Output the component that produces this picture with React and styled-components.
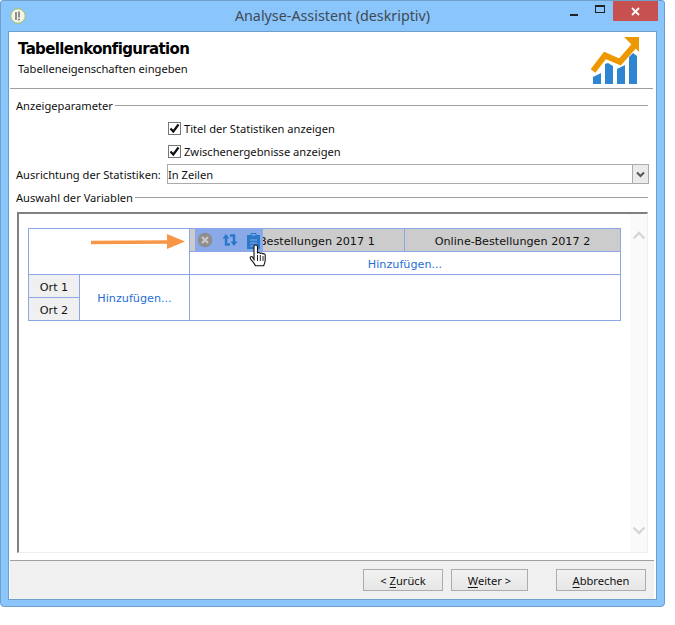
import React from 'react';
import styled, { createGlobalStyle } from 'styled-components';

const GlobalStyle = createGlobalStyle`
  html, body {
    margin: 0;
    padding: 0;
    background: #ffffff;
  }
  * {
    box-sizing: border-box;
  }
`;

const uiFont = `"Noto Sans", "Open Sans", sans-serif`;
const tableFont = `"DejaVu Sans", Verdana, sans-serif`;

const Window = styled('div')`
  width: 665px;
  height: 607px;
  display: flex;
  flex-direction: column;
  padding: 0 7px 6px 7px;
  background: #8ac5fb;
  border: 1px solid #6f9fcb;
  border-radius: 3px 3px 4px 4px;
  font-family: ${uiFont};
  font-size: 11.15px;
  color: #111;
`;

const TitleBar = styled('div')`
  position: relative;
  height: 30px;
  flex: none;
  padding-bottom: 2px;
  display: flex;
  align-items: center;
  justify-content: center;
`;

const TitleText = styled('span')`
  font-size: 14.3px;
  color: #3f4a55;
`;

const AppIcon = styled('svg')`
  position: absolute;
  left: 2px;
  top: 7px;
`;

const WindowControls = styled('div')`
  position: absolute;
  right: -1px;
  top: 0;
  display: flex;
  align-items: flex-start;
`;

const ControlSlot = styled('div')`
  width: ${(p) => p.$w}px;
  height: 20px;
  padding-left: ${(p) => p.$pad || 0}px;
  display: flex;
  align-items: center;
  justify-content: ${(p) => (p.$close ? 'center' : 'flex-start')};
  background: ${(p) => (p.$close ? '#c75050' : 'transparent')};
`;

const Client = styled('div')`
  flex: 1;
  display: flex;
  flex-direction: column;
  background: #ffffff;
  border: 1px solid #6f9fcb;
  min-height: 0;
`;

const Header = styled('div')`
  height: 57px;
  flex: none;
  margin-right: 3px;
  margin-left: 1px;
  padding: 7px 12px 0 8px;
  display: flex;
  justify-content: space-between;
  border-bottom: 1px solid #a0a0a0;
`;

const HeaderTitle = styled('h1')`
  margin: 0;
  font-size: 15px;
  line-height: 20px;
  font-weight: 700;
  color: #000;
  font-family: "DejaVu Sans", sans-serif;
  letter-spacing: -0.65px;
`;

const HeaderSub = styled('div')`
  line-height: 20px;
`;

const Logo = styled('svg')`
  flex: none;
  margin-top: -2px;
`;

const Body = styled('div')`
  flex: 1;
  min-height: 0;
  padding: 7px 8px 7px 7px;
  display: flex;
  flex-direction: column;
`;

const Legend = styled('div')`
  height: 18px;
  display: flex;
  align-items: center;
  gap: 2px;
  white-space: nowrap;
  &::after {
    content: '';
    flex: 1;
    height: 1px;
    background: #a0a0a0;
  }
`;

const CheckGroup = styled('div')`
  margin-top: 3px;
`;

const CheckRow = styled('label')`
  height: 23px;
  padding-left: 152px;
  display: flex;
  align-items: center;
  gap: 3px;
  white-space: nowrap;
`;

const CheckBox = styled('span')`
  width: 13px;
  height: 13px;
  border: 1px solid #777;
  background: #fff;
  display: flex;
  align-items: center;
  justify-content: center;
`;

const SelectRow = styled('div')`
  height: 20px;
  margin-top: 1px;
  display: flex;
  align-items: center;
  white-space: nowrap;
`;

const SelectLabel = styled('span')`
  width: 151px;
  flex: none;
`;

const SelectBox = styled('div')`
  flex: 1;
  height: 20px;
  margin-right: -1px;
  display: flex;
  align-items: center;
  justify-content: space-between;
  border: 1px solid #ababab;
`;

const SelectArrow = styled('div')`
  width: 16px;
  height: 18px;
  display: flex;
  align-items: center;
  justify-content: center;
  background: #ebebeb;
  border-left: 1px solid #ababab;
`;

const VariablesLegend = styled(Legend)`
  margin-top: 4px;
`;

const Panel = styled('div')`
  position: relative;
  flex: 1;
  margin: 6px 0 0 1px;
  padding: 14px 27px 0 9px;
  border-top: 2px solid #808080;
  border-left: 2px solid #808080;
  border-bottom: 1px solid #efefef;
  border-right: 1px solid #efefef;
`;

const ScrollTrack = styled('div')`
  position: absolute;
  right: 0;
  top: 0;
  bottom: 0;
  width: 17px;
  background: #fafafa;
  display: flex;
  flex-direction: column;
  justify-content: space-between;
  align-items: center;
  padding: 17px 0 17px;
`;

const Grid = styled('div')`
  display: grid;
  grid-template-columns: 51px 110px 215px 216px;
  grid-template-rows: 23px 23px 23px 23px;
  width: 593px;
  border-top: 1px solid #8ba7e6;
  border-left: 1px solid #8ba7e6;
  font-family: ${tableFont};
  font-size: 11.2px;
`;

const Cell = styled('div')`
  display: flex;
  align-items: center;
  justify-content: center;
  padding-top: 2px;
  white-space: nowrap;
  border-right: 1px solid #8ba7e6;
  border-bottom: 1px solid #8ba7e6;
  grid-column: ${(p) => p.$col || 'auto'};
  grid-row: ${(p) => p.$row || 'auto'};
  background: ${(p) => p.$bg || '#fff'};
`;

const AddLink = styled('span')`
  color: #1f6fd6;
`;

const Toolbar = styled('div')`
  position: absolute;
  left: 176px;
  top: 14px;
  width: 68px;
  height: 24px;
  display: flex;
  align-items: center;
  gap: 9px;
  padding-left: 2px;
  background: #8aa9e8;
`;

const Arrow = styled('svg')`
  position: absolute;
  left: 72px;
  top: 18px;
`;

const HandCursor = styled('svg')`
  position: absolute;
  left: 230px;
  top: 30px;
`;

const Footer = styled('div')`
  height: 39px;
  flex: none;
  margin-left: 1px;
  margin-right: 2px;
  padding: 8px 8px 0 0;
  display: flex;
  justify-content: flex-end;
  background: #f0f0f0;
  border-top: 1px solid #a0a0a0;
`;

const Button = styled('button')`
  width: ${(p) => p.$w}px;
  height: 22px;
  margin-left: ${(p) => p.$gap}px;
  padding: 0;
  font-family: ${uiFont};
  font-size: 11.15px;
  color: #111;
  background: linear-gradient(#f2f2f2, #e6e6e6);
  border: 1px solid #acacac;
  u {
    text-underline-offset: 2px;
  }
`;

const Chevron = ({ up }) => (
  <svg width="14" height="9" viewBox="0 0 14 9">
    <path
      d={up ? 'M1.5 7.5 7 2l5.5 5.5' : 'M1.5 1.5 7 7l5.5-5.5'}
      fill="none"
      stroke="#d6d6d6"
      strokeWidth="2.4"
    />
  </svg>
);

const Check = () => (
  <svg width="11" height="11" viewBox="0 0 11 11">
    <path d="M1.500 5.500 4.300 8.500 9.500 1.500" fill="none" stroke="#111" strokeWidth="2.200" />
  </svg>
);

const App = () => (
  <>
    <GlobalStyle />
    <Window>
      <TitleBar>
        <AppIcon width="16" height="16" viewBox="0 0 16 16">
          <circle cx="8" cy="8" r="7.2" fill="#f4f4ec" stroke="#a8c05a" strokeWidth="1" />
          <path d="M6 4v8M9 3.5v6" stroke="#777" strokeWidth="1.6" fill="none" />
          <circle cx="9" cy="11.5" r="1" fill="#777" />
        </AppIcon>
        <TitleText>Analyse-Assistent (deskriptiv)</TitleText>
        <WindowControls>
          <ControlSlot $w={26} $pad={1}>
            <svg width="9" height="10" viewBox="0 0 9 10">
              <rect x="0" y="8" width="8" height="2" fill="#222" />
            </svg>
          </ControlSlot>
          <ControlSlot $w={18}>
            <svg width="11" height="9" viewBox="0 0 11 9" style={{ marginTop: -3 }}>
              <rect x="0.5" y="0.5" width="9" height="7" fill="none" stroke="#222" />
              <rect x="0" y="0" width="10" height="2" fill="#222" />
            </svg>
          </ControlSlot>
          <ControlSlot $w={45} $close>
            <svg width="9" height="9" viewBox="0 0 9 9">
              <path d="M1 1l7 7M8 1 1 8" stroke="#fff" strokeWidth="1.8" />
            </svg>
          </ControlSlot>
        </WindowControls>
      </TitleBar>
      <Client>
        <Header>
          <div>
            <HeaderTitle>Tabellenkonfiguration</HeaderTitle>
            <HeaderSub>Tabelleneigenschaften eingeben</HeaderSub>
          </div>
          <Logo width="50" height="47" viewBox="0 0 50 47">
            <path
              d="M2 40 10 36v11H2zM14 27l3-1 5 3v18h-8zM26 32l8-4v19h-8zM38 20l4-4 4 3v28h-8z"
              fill="#2e86d2"
            />
            <path
              d="M2 34 14 18.500 29 25 43 9"
              fill="none"
              stroke="#ee9800"
              strokeWidth="6"
            />
            <path d="M33 0h15v15z" fill="#ee9800" />
          </Logo>
        </Header>
        <Body>
          <Legend>Anzeigeparameter</Legend>
          <CheckGroup>
            <CheckRow>
              <CheckBox><Check /></CheckBox>
              Titel der Statistiken anzeigen
            </CheckRow>
            <CheckRow>
              <CheckBox><Check /></CheckBox>
              Zwischenergebnisse anzeigen
            </CheckRow>
          </CheckGroup>
          <SelectRow>
            <SelectLabel>Ausrichtung der Statistiken:</SelectLabel>
            <SelectBox>
              In Zeilen
              <SelectArrow>
                <svg width="9" height="7" viewBox="0 0 9 7">
                  <path d="M1 1.500 4.500 5 8 1.500" fill="none" stroke="#555" strokeWidth="2" />
                </svg>
              </SelectArrow>
            </SelectBox>
          </SelectRow>
          <VariablesLegend>Auswahl der Variablen</VariablesLegend>
          <Panel>
            <Grid>
              <Cell $col="1 / 3" $row="1 / 3" />
              <Cell $col="3" $row="1" $bg="#cccccc">Online-Bestellungen 2017 1</Cell>
              <Cell $col="4" $row="1" $bg="#cccccc">Online-Bestellungen 2017 2</Cell>
              <Cell $col="3 / 5" $row="2"><AddLink>Hinzufügen...</AddLink></Cell>
              <Cell $col="1" $row="3" $bg="#f0f0f0">Ort 1</Cell>
              <Cell $col="1" $row="4" $bg="#f0f0f0">Ort 2</Cell>
              <Cell $col="2" $row="3 / 5"><AddLink>Hinzufügen...</AddLink></Cell>
              <Cell $col="3 / 5" $row="3 / 5" />
            </Grid>
            <Arrow width="96" height="20" viewBox="0 0 96 20">
              <path d="M0 10.500 78 10" stroke="#f79646" strokeWidth="3.500" />
              <path d="M76 2 94 9.500 76 17z" fill="#f79646" />
            </Arrow>
            <Toolbar>
              <svg width="16" height="16" viewBox="0 0 16 16">
                <circle cx="8" cy="8" r="7.300" fill="#8e8e8e" />
                <path d="M5 5l6 6M11 5l-6 6" stroke="#c8c8c8" strokeWidth="2.200" />
              </svg>
              <svg width="16" height="16" viewBox="0 0 16 16">
                <path d="M4 5v7.500h4M12 11V3.500H8" fill="none" stroke="#2a78c8" strokeWidth="2.400" />
                <path d="M0.500 6.500 4 2 7.500 6.500zM8.500 9.500 12 14 15.500 9.500z" fill="#2a78c8" />
              </svg>
              <svg width="13" height="17" viewBox="0 0 13 17">
                <path d="M0 3h13v14H0z" fill="#2a78c8" />
                <path d="M4 4V1.500h5V4z" fill="#8aa9e8" stroke="#2a78c8" />
                <path d="M3 8h7M3 11h7M3 14h7" stroke="#8aa9e8" />
              </svg>
            </Toolbar>
            <HandCursor width="19" height="25" viewBox="0 0 19 25">
              <path
                d="M5 2.500c0-2 3.500-2 3.500 0v7c.3-1.500 2.700-1.300 2.800.3.300-1.300 2.500-1.100 2.600.5.400-1 2.300-.8 2.300.8v5c0 2.500-1 3.700-1.500 5.700H6.500c-.7-2-2.500-3.800-5-7-1-1.400.6-3 2-1.800L5 15.500z"
                fill="#fff"
                stroke="#111"
                strokeWidth="1.100"
              />
              <path d="M8.500 11v6M11.300 11v6M14 12v5" stroke="#111" strokeWidth="0.900" />
            </HandCursor>
            <ScrollTrack>
              <Chevron up />
              <Chevron />
            </ScrollTrack>
          </Panel>
        </Body>
        <Footer>
          <Button $w={80}>&lt; <u>Z</u>urück</Button>
          <Button $w={77} $gap={8}><u>W</u>eiter &gt;</Button>
          <Button $w={90} $gap={28}><u>A</u>bbrechen</Button>
        </Footer>
      </Client>
    </Window>
  </>
);

export default App;
